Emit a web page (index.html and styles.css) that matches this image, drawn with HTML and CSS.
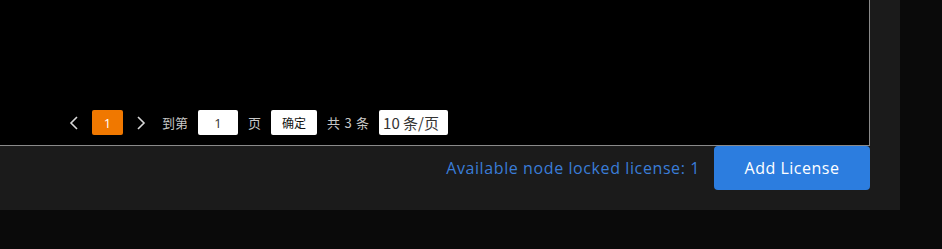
FILE: index.html
```html
<!DOCTYPE html>
<html lang="zh">
<head>
<meta charset="utf-8">
<link rel="stylesheet" href="styles.css">
</head>
<body>
<div class="panel">
  <div class="table-box">
    <div class="pager">
      <span class="pg-arrow pg-prev"><svg width="10" height="14" viewBox="0 0 10 14"><path d="M8 1 L2 7 L8 13" fill="none" stroke="#d8d8d8" stroke-width="1.6"/></svg></span>
      <span class="pg-current">1</span>
      <span class="pg-arrow pg-next"><svg width="10" height="14" viewBox="0 0 10 14"><path d="M2 1 L8 7 L2 13" fill="none" stroke="#d8d8d8" stroke-width="1.6"/></svg></span>
      <span class="pg-label pg-goto">到第</span>
      <span class="pg-input">1</span>
      <span class="pg-label pg-page">页</span>
      <span class="pg-btn">确定</span>
      <span class="pg-label pg-total">共 3 条</span>
      <span class="pg-size">10 条/页</span>
    </div>
  </div>
  <div class="footer">
    <span class="avail">Available node locked license: 1</span>
    <button class="add-btn">Add License</button>
  </div>
</div>
</body>
</html>
```
FILE: styles.css
```css
html, body {
  margin: 0;
  padding: 0;
  background: #0a0a0a;
}
body {
  font-family: "Open Sans", "Noto Sans CJK SC", sans-serif;
}
.panel {
  width: 900px;
  height: 210px;
  background: #1b1b1b;
}
.table-box {
  width: 869px;
  height: 145px;
  background: #000;
  border-right: 1px solid #8a8a8a;
  border-bottom: 1px solid #8a8a8a;
  display: flex;
  flex-direction: column;
  justify-content: flex-end;
  box-sizing: content-box;
}
.pager {
  display: flex;
  align-items: center;
  height: 25px;
  padding-left: 64px;
  margin-bottom: 10px;
  font-family: "Noto Sans CJK SC", sans-serif;
  font-size: 13px;
}
.pg-arrow {
  width: 20px;
  height: 25px;
  display: flex;
  align-items: center;
  justify-content: center;
}
.pg-current {
  margin-left: 8px;
  width: 31px;
  height: 25px;
  background: #f07800;
  color: #fff;
  border-radius: 2px;
  display: flex;
  align-items: center;
  justify-content: center;
  font-family: "Open Sans", sans-serif;
  font-size: 13px;
}
.pg-next { margin-left: 8px; }
.pg-label {
  color: #c8c8c8;
  line-height: 25px;
}
.pg-goto { margin-left: 11px; }
.pg-page, .pg-total { margin-left: 10px; }
.pg-total { word-spacing: 1.5px; }
.pg-input {
  margin-left: 10px;
  width: 40px;
  height: 25px;
  background: #fff;
  border-radius: 2px;
  color: #333;
  display: flex;
  align-items: center;
  justify-content: center;
  font-family: "Open Sans", sans-serif;
  font-size: 13px;
}
.pg-btn {
  margin-left: 10px;
  width: 46px;
  height: 25px;
  background: #fff;
  border-radius: 2px;
  color: #111;
  font-size: 12px;
  display: flex;
  align-items: center;
  justify-content: center;
}
.pg-size {
  margin-left: 10px;
  width: 69px;
  height: 25px;
  background: #fff;
  border-radius: 2px;
  color: #333;
  font-size: 15px;
  box-sizing: border-box;
  padding-left: 4px;
  display: flex;
  align-items: center;
}
.footer {
  width: 870px;
  display: flex;
  justify-content: flex-end;
  align-items: center;
  gap: 14px;
}
.avail {
  color: #3a7dd8;
  font-size: 16px;
  letter-spacing: 0.6px;
}
.add-btn {
  width: 156px;
  height: 44px;
  border: none;
  border-radius: 4px;
  background: #2c7ddf;
  color: #fff;
  font-family: "Open Sans", sans-serif;
  font-size: 16px;
  letter-spacing: 0.5px;
  padding: 0;
}
```
